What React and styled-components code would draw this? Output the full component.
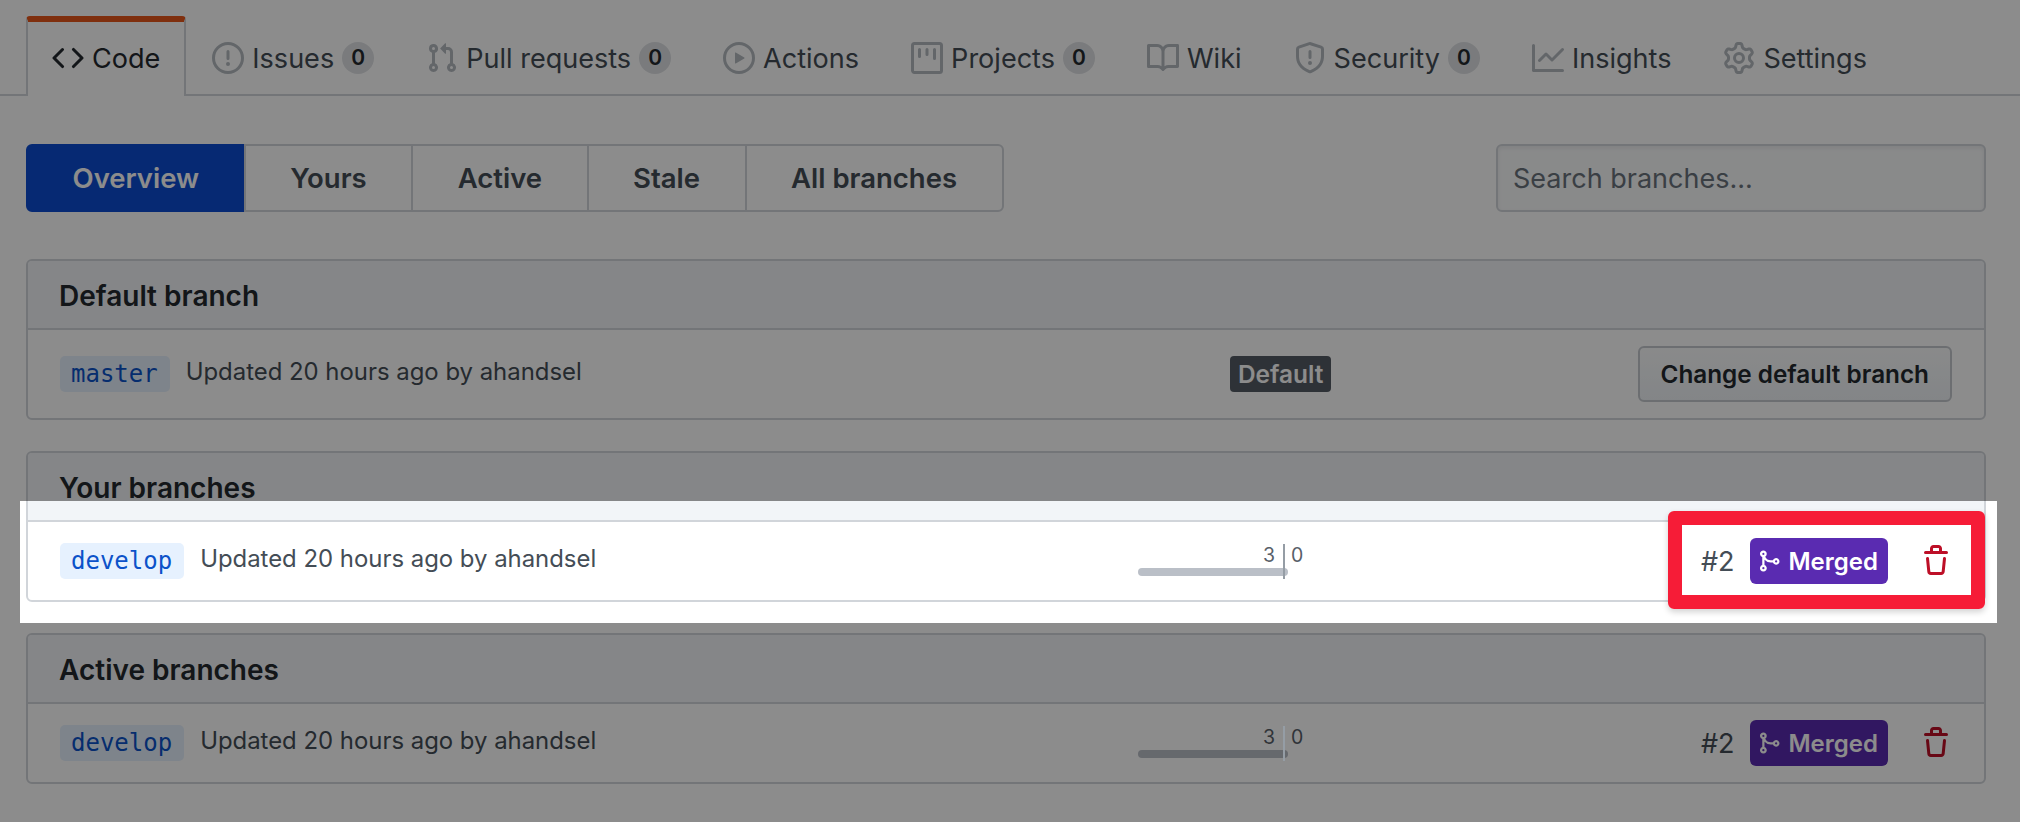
import React from "react";
import styled, { createGlobalStyle } from "styled-components";

const ICONS = {
  code: "M4.72 3.22a.75.75 0 011.06 1.06L2.06 8l3.72 3.72a.75.75 0 11-1.06 1.06L.47 8.53a.75.75 0 010-1.06l4.25-4.25zm6.56 0a.75.75 0 10-1.06 1.06L13.94 8l-3.72 3.72a.75.75 0 101.06 1.06l4.25-4.25a.75.75 0 000-1.06l-4.25-4.25z",
  issue: "M8 1.5a6.5 6.5 0 100 13 6.5 6.5 0 000-13zM0 8a8 8 0 1116 0A8 8 0 010 8zm9 3a1 1 0 11-2 0 1 1 0 012 0zm-.25-6.25a.75.75 0 00-1.5 0v3.5a.75.75 0 001.5 0v-3.5z",
  pull: "M7.177 3.073L9.573.677A.25.25 0 0110 .854v4.792a.25.25 0 01-.427.177L7.177 3.427a.25.25 0 010-.354zM3.75 2.5a.75.75 0 100 1.5.75.75 0 000-1.5zm-2.25.75a2.25 2.25 0 113 2.122v5.256a2.251 2.251 0 11-1.5 0V5.372A2.25 2.25 0 011.5 3.25zM11 2.5h-1V4h1a1 1 0 011 1v5.628a2.251 2.251 0 101.5 0V5A2.5 2.5 0 0011 2.5zm1 10.25a.75.75 0 111.5 0 .75.75 0 01-1.5 0zM3.75 12a.75.75 0 100 1.5.75.75 0 000-1.5z",
  play: "M1.5 8a6.5 6.5 0 1113 0 6.5 6.5 0 01-13 0zM8 0a8 8 0 100 16A8 8 0 008 0zM6.379 5.227A.25.25 0 006 5.442v5.117a.25.25 0 00.379.214l4.264-2.559a.25.25 0 000-.428L6.379 5.227z",
  project: "M1.75 0A1.75 1.75 0 000 1.75v12.5C0 15.216.784 16 1.75 16h12.5A1.75 1.75 0 0016 14.25V1.75A1.75 1.75 0 0014.25 0H1.75zM1.5 1.75a.25.25 0 01.25-.25h12.5a.25.25 0 01.25.25v12.5a.25.25 0 01-.25.25H1.75a.25.25 0 01-.25-.25V1.75zM11.75 3a.75.75 0 00-.75.75v4.5a.75.75 0 001.5 0v-4.5a.75.75 0 00-.75-.75zm-8.25.75a.75.75 0 011.5 0v3.5a.75.75 0 01-1.5 0v-3.5zM8 3a.75.75 0 00-.75.75v2.5a.75.75 0 001.5 0v-2.5A.75.75 0 008 3z",
  book: "M0 1.75A.75.75 0 01.75 1h4.253c1.227 0 2.317.59 3 1.501A3.744 3.744 0 0111.006 1h4.245a.75.75 0 01.75.75v10.5a.75.75 0 01-.75.75h-4.507a2.25 2.25 0 00-1.591.659l-.622.621a.75.75 0 01-1.06 0l-.622-.621A2.25 2.25 0 005.258 13H.75a.75.75 0 01-.75-.75V1.75zm8.755 3a2.25 2.25 0 012.25-2.25H14.5v9h-3.757c-.71 0-1.4.201-1.992.572l.004-7.322zm-1.504 7.324l.004-5.073-.002-2.253A2.25 2.25 0 005.003 2.5H1.5v9h3.757a3.75 3.75 0 011.994.574z",
  shield: "M7.467.133a1.75 1.75 0 011.066 0l5.25 1.68A1.75 1.75 0 0115 3.48V7c0 1.566-.32 3.182-1.303 4.682-.983 1.498-2.585 2.813-5.032 3.855a1.7 1.7 0 01-1.33 0c-2.447-1.042-4.049-2.357-5.032-3.855C1.32 10.182 1 8.566 1 7V3.48a1.75 1.75 0 011.217-1.667l5.25-1.68zm.61 1.429a.25.25 0 00-.153 0l-5.25 1.68a.25.25 0 00-.174.238V7c0 1.358.275 2.666 1.057 3.86.784 1.194 2.121 2.34 4.366 3.297a.2.2 0 00.154 0c2.245-.956 3.582-2.104 4.366-3.298C13.225 9.666 13.5 8.36 13.5 7V3.48a.25.25 0 00-.174-.237l-5.25-1.68zM9 10.5a1 1 0 11-2 0 1 1 0 012 0zm-.25-5.75a.75.75 0 10-1.5 0v3a.75.75 0 001.5 0v-3z",
  graph: "M1.5 1.75a.75.75 0 00-1.5 0v12.5c0 .414.336.75.75.75h14.5a.75.75 0 000-1.5H1.5V1.75zm14.28 2.53a.75.75 0 00-1.06-1.06L10 7.94 7.53 5.47a.75.75 0 00-1.06 0L3.22 8.72a.75.75 0 001.06 1.06L7 7.06l2.47 2.47a.75.75 0 001.06 0l5.25-5.25z",
  gear: "M7.429 1.525a6.593 6.593 0 011.142 0c.036.003.108.036.137.146l.289 1.105c.147.56.55.967.997 1.189.174.086.341.183.501.29.417.278.97.423 1.53.27l1.102-.303c.11-.03.175.016.195.046.219.31.41.641.573.989.014.031.022.11-.059.19l-.815.806c-.411.406-.562.957-.53 1.456a4.588 4.588 0 010 .582c-.032.499.119 1.05.53 1.456l.815.806c.08.08.073.159.059.19a6.494 6.494 0 01-.573.99c-.02.029-.086.074-.195.045l-1.103-.303c-.559-.153-1.112-.008-1.529.27-.16.107-.327.204-.5.29-.449.222-.851.628-.998 1.189l-.289 1.105c-.029.11-.101.143-.137.146a6.613 6.613 0 01-1.142 0c-.036-.003-.108-.037-.137-.146l-.289-1.105c-.147-.56-.55-.967-.997-1.189a4.502 4.502 0 01-.501-.29c-.417-.278-.97-.423-1.53-.27l-1.102.303c-.11.03-.175-.016-.195-.046a6.492 6.492 0 01-.573-.989c-.014-.031-.022-.11.059-.19l.815-.806c.411-.406.562-.957.53-1.456a4.587 4.587 0 010-.582c.032-.499-.119-1.05-.53-1.456l-.815-.806c-.08-.08-.073-.159-.059-.19a6.44 6.44 0 01.573-.99c.02-.029.086-.075.195-.045l1.103.303c.559.153 1.112.008 1.529-.27.16-.107.327-.204.5-.29.449-.222.851-.628.998-1.189l.289-1.105c.029-.11.101-.143.137-.146zM8 0c-.236 0-.47.01-.701.03-.743.065-1.29.615-1.458 1.261l-.29 1.106c-.017.066-.078.158-.211.224a5.994 5.994 0 00-.668.386c-.123.082-.233.09-.3.071L3.27 2.776c-.644-.177-1.392.02-1.82.63a7.977 7.977 0 00-.704 1.217c-.315.675-.111 1.422.363 1.891l.815.806c.05.048.098.147.088.294a6.084 6.084 0 000 .772c.01.147-.038.246-.088.294l-.815.806c-.474.469-.678 1.216-.363 1.891.2.428.436.835.704 1.218.428.609 1.176.806 1.82.63l1.103-.303c.066-.019.176-.011.299.071.213.143.436.272.668.386.133.066.194.158.212.224l.289 1.106c.169.646.715 1.196 1.458 1.26a8.094 8.094 0 001.402 0c.743-.064 1.29-.614 1.458-1.26l.29-1.106c.017-.066.078-.158.211-.224a5.98 5.98 0 00.668-.386c.123-.082.233-.09.3-.071l1.102.302c.644.177 1.392-.02 1.82-.63.268-.382.505-.789.704-1.217.315-.675.111-1.422-.364-1.891l-.814-.806c-.05-.048-.098-.147-.088-.294a6.1 6.1 0 000-.772c-.01-.147.039-.246.088-.294l.814-.806c.475-.469.679-1.216.364-1.891a7.992 7.992 0 00-.704-1.218c-.428-.609-1.176-.806-1.82-.63l-1.103.303c-.066.019-.176.011-.299-.071a5.991 5.991 0 00-.668-.386c-.133-.066-.194-.158-.212-.224L10.16 1.29C9.99.645 9.444.095 8.701.031A8.094 8.094 0 008 0zm1.5 8a1.5 1.5 0 11-3 0 1.5 1.5 0 013 0zM11 8a3 3 0 11-6 0 3 3 0 016 0z",
  merge: "M5 3.254V3.25v.005a.75.75 0 110-.005v.004zm.45 1.9a2.25 2.25 0 10-1.95.218v5.256a2.25 2.25 0 101.5 0V7.123A5.735 5.735 0 009.25 9h1.378a2.251 2.251 0 100-1.5H9.25a4.25 4.25 0 01-3.8-2.346zM12.75 9a.75.75 0 100-1.5.75.75 0 000 1.5zm-8.5 4.5a.75.75 0 100-1.5.75.75 0 000 1.5z",
  trash: "M6.5 1.75a.25.25 0 01.25-.25h2.5a.25.25 0 01.25.25V3h-3V1.75zm4.5 0V3h2.25a.75.75 0 010 1.5H2.75a.75.75 0 010-1.5H5V1.75C5 .784 5.784 0 6.75 0h2.5C10.216 0 11 .784 11 1.75zM4.496 6.675a.75.75 0 10-1.492.15l.66 6.6A1.75 1.75 0 005.405 15h5.19c.9 0 1.652-.681 1.741-1.576l.66-6.6a.75.75 0 00-1.492-.15l-.66 6.6a.25.25 0 01-.249.225h-5.19a.25.25 0 01-.249-.225l-.66-6.6z",
};

const GlobalStyle = createGlobalStyle`
  html, body {
    margin: 0;
    padding: 0;
    background: #fff;
  }
  body {
    font-family: Inter, "Liberation Sans", sans-serif;
    color: #24292e;
  }
`;

const Page = styled.div`
  position: relative;
  width: 2020px;
  height: 822px;
  overflow: hidden;
`;

const TabBar = styled.nav`
  display: flex;
  box-sizing: border-box;
  height: 96px;
  padding: 16px 0 0 26px;
  border-bottom: 2px solid #d1d5da;
`;

const Tab = styled.a`
  display: flex;
  align-items: center;
  gap: 8px;
  box-sizing: border-box;
  height: 80px;
  margin-bottom: -2px;
  padding: 0 24px 2px;
  font-size: 27.05px;
  border: 2px solid transparent;
  border-bottom: 0;
  border-top: 6px solid transparent;
  border-radius: 4px 4px 0 0;
  color: ${(p) => (p.$active ? "#24292e" : "#444d56")};

  ${(p) =>
    p.$active &&
    `
    background: #fff;
    border-color: #d1d5da;
    border-top-color: #e8561a;
  `}
`;

const Icon = styled.svg`
  flex: none;
  width: ${(p) => p.$size}px;
  height: ${(p) => p.$size}px;
  fill: ${(p) => p.$color};
`;

const Counter = styled.span`
  display: inline-block;
  min-width: 32px;
  box-sizing: border-box;
  padding: 0 9px;
  font-size: 21px;
  font-weight: 600;
  line-height: 32px;
  text-align: center;
  color: #24292e;
  background: #dfe1e4;
  border-radius: 16px;
`;

const Content = styled.main`
  padding: 48px 34px 0 26px;
`;

const Toolbar = styled.div`
  display: flex;
  justify-content: space-between;
  margin-bottom: 47px;
`;

const FilterNav = styled.div`
  display: flex;
  height: 68px;
`;

const FilterItem = styled.a`
  display: flex;
  align-items: center;
  box-sizing: border-box;
  padding: 0 44.5px;
  font-size: 27.5px;
  font-weight: 600;
  border: 2px solid ${(p) => (p.$selected ? "#0b4cd1" : "#d1d5da")};
  margin-left: -2px;
  color: ${(p) => (p.$selected ? "#fff" : "#444d56")};
  background: ${(p) => (p.$selected ? "#0b4cd1" : "#fff")};

  &:first-child {
    margin-left: 0;
    border-radius: 6px 0 0 6px;
  }
  &:last-child {
    border-radius: 0 6px 6px 0;
  }
`;

const SearchInput = styled.input`
  box-sizing: border-box;
  width: 490px;
  height: 68px;
  padding: 0 15px;
  font-family: inherit;
  font-size: 27px;
  background: #fafbfc;
  border: 2px solid #d1d5da;
  border-radius: 6px;
  outline: none;
  box-shadow: inset 0 2px 4px rgba(27, 31, 35, 0.08);

  &::placeholder {
    color: #6a737d;
    opacity: 1;
  }
`;

const Box = styled.section`
  margin-bottom: 31px;
  background: #fff;
  border: 2px solid #d1d5da;
  border-radius: 6px;
`;

const BoxHeader = styled.h3`
  box-sizing: border-box;
  height: 69px;
  margin: 0;
  padding: 0 31px;
  font-size: 28px;
  font-weight: 600;
  line-height: 71px;
  background: #f2f5f8;
  border-bottom: 2px solid #d1d5da;
  border-radius: 4px 4px 0 0;
`;

const Row = styled.div`
  display: grid;
  grid-template-columns: 1078px 200px 1fr;
  align-items: center;
  height: ${(p) => (p.$tall ? 88 : 78)}px;
  padding: 0 32px;
`;

const BranchCell = styled.div`
  display: flex;
  align-items: center;
  gap: 16px;
`;

const BranchName = styled.code`
  box-sizing: border-box;
  height: 36px;
  padding: 0 12px 0 11px;
  font-family: "DejaVu Sans Mono", "Liberation Mono", monospace;
  font-size: 24px;
  line-height: 36px;
  color: #0b52c9;
  background: #e6f1fe;
  border-radius: 5px;
`;

const Updated = styled.span`
  margin-top: -5px;
  font-size: 23.9px;
  color: #444d56;
`;

const DefaultLabel = styled.span`
  justify-self: start;
  margin-left: 92px;
  box-sizing: border-box;
  height: 36px;
  padding: 0 8px;
  font-size: 24.4px;
  font-weight: 600;
  line-height: 36px;
  color: #fff;
  background: #555c64;
  border-radius: 4px;
`;

const Graph = styled.div`
  display: flex;
  width: 164px;
  height: 35px;
`;

const GraphBehind = styled.div`
  display: flex;
  flex-direction: column;
  align-items: flex-end;
  justify-content: space-between;
  width: 145px;
`;

const GraphDivider = styled.div`
  flex: none;
  position: relative;
  z-index: 1;
  width: 2px;
  background: #959da5;
`;

const GraphCount = styled.span`
  padding: 0 8px;
  font-size: 19.5px;
  line-height: 22px;
  color: #586069;
`;

const GraphAhead = styled(GraphCount)`
  padding: 0 6px;
`;

const GraphBar = styled.div`
  flex: none;
  box-sizing: border-box;
  width: 150px;
  height: 8px;
  margin: 0 -5px 3px 0;
  background: #babfc7;
  border-radius: 4px;
`;

const ActionCell = styled.div`
  display: flex;
  align-items: center;
  justify-content: flex-end;
`;

const PullNumber = styled.span`
  font-size: 27px;
  color: #444d56;
`;

const MergedState = styled.span`
  display: flex;
  align-items: center;
  gap: 7px;
  box-sizing: border-box;
  height: 46px;
  margin: 0 32px 0 16px;
  padding: 0 10px 0 7px;
  font-size: 24px;
  font-weight: 600;
  color: #fff;
  background: #5a2bb1;
  border-radius: 6px;
`;

const ChangeButton = styled.button`
  box-sizing: border-box;
  height: 56px;
  padding: 0 21px;
  font-family: inherit;
  font-size: 24.3px;
  font-weight: 600;
  color: #24292e;
  background: linear-gradient(#fafbfc, #eff3f6);
  border: 2px solid #c5c9ce;
  border-radius: 6px;
`;

/* dims the whole page except the row being pointed at */
const Spotlight = styled.div`
  position: absolute;
  left: 20px;
  top: 501px;
  width: 1977px;
  height: 122px;
  box-shadow: 0 0 0 3000px rgba(0, 0, 0, 0.45);
`;

const Callout = styled.div`
  position: absolute;
  left: 1668px;
  top: 511px;
  box-sizing: border-box;
  width: 317px;
  height: 98px;
  border: 14px solid #f61c37;
  border-radius: 6px;
  box-shadow: 0 3px 6px rgba(0, 0, 0, 0.18);
`;

const Octicon = ({ name, size = 32, color = "#b4bac0" }) => (
  <Icon viewBox="0 0 16 16" $size={size} $color={color}>
    <path fillRule="evenodd" d={ICONS[name]} />
  </Icon>
);

const TABS = [
  { icon: "code", label: "Code", active: true },
  { icon: "issue", label: "Issues", count: 0 },
  { icon: "pull", label: "Pull requests", count: 0 },
  { icon: "play", label: "Actions" },
  { icon: "project", label: "Projects", count: 0 },
  { icon: "book", label: "Wiki" },
  { icon: "shield", label: "Security", count: 0 },
  { icon: "graph", label: "Insights" },
  { icon: "gear", label: "Settings" },
];

const FILTERS = ["Overview", "Yours", "Active", "Stale", "All branches"];

const BranchInfo = ({ name }) => (
  <BranchCell>
    <BranchName>{name}</BranchName>
    <Updated>Updated 20 hours ago by ahandsel</Updated>
  </BranchCell>
);

const DevelopRow = () => (
  <Row>
    <BranchInfo name="develop" />
    <Graph>
      <GraphBehind>
        <GraphCount>3</GraphCount>
        <GraphBar />
      </GraphBehind>
      <GraphDivider />
      <GraphAhead>0</GraphAhead>
    </Graph>
    <ActionCell>
      <PullNumber>#2</PullNumber>
      <MergedState>
        <Octicon name="merge" size={24} color="#fff" />
        Merged
      </MergedState>
      <Octicon name="trash" color="#bd0f27" />
    </ActionCell>
  </Row>
);

const App = () => (
  <Page>
    <GlobalStyle />
    <TabBar>
      {TABS.map((tab) => (
        <Tab key={tab.label} $active={tab.active}>
          <Octicon name={tab.icon} color={tab.active ? "#24292e" : "#b4bac0"} />
          {tab.label}
          {tab.count !== undefined && <Counter>{tab.count}</Counter>}
        </Tab>
      ))}
    </TabBar>
    <Content>
      <Toolbar>
        <FilterNav>
          {FILTERS.map((f, i) => (
            <FilterItem key={f} $selected={i === 0}>
              {f}
            </FilterItem>
          ))}
        </FilterNav>
        <SearchInput placeholder="Search branches..." />
      </Toolbar>
      <Box>
        <BoxHeader>Default branch</BoxHeader>
        <Row $tall>
          <BranchInfo name="master" />
          <DefaultLabel>Default</DefaultLabel>
          <ActionCell>
            <ChangeButton>Change default branch</ChangeButton>
          </ActionCell>
        </Row>
      </Box>
      <Box>
        <BoxHeader>Your branches</BoxHeader>
        <DevelopRow />
      </Box>
      <Box>
        <BoxHeader>Active branches</BoxHeader>
        <DevelopRow />
      </Box>
    </Content>
    <Spotlight />
    <Callout />
  </Page>
);

export default App;
